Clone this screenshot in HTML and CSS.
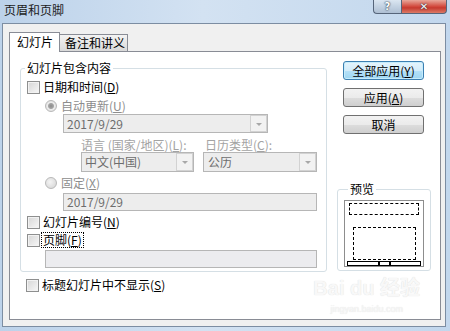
FILE: index.html
```html
<!DOCTYPE html>
<html>

<head>
	<meta charset="utf-8">
	<title>页眉和页脚</title>
	<link rel="stylesheet" href="styles.css">
</head>

<body>
	<div class="window">
		<div class="titlebar">
			<span class="title">页眉和页脚</span>
			<div class="caption-buttons">
				<span class="cap-btn help">?</span>
				<span class="cap-btn close">✕</span>
			</div>
		</div>

		<div class="client">
			<div class="tabs">
				<span class="tab active">幻灯片</span>
				<span class="tab">备注和讲义</span>
			</div>

			<div class="panel">
				<div class="left">
					<fieldset class="group content-group">
						<legend>幻灯片包含内容</legend>
						<div class="row check-row"><span class="check"></span><span>日期和时间(<u>D</u>)</span></div>
						<div class="row radio-row r-auto disabled"><span class="radio on"></span><span>自动更新(<u>U</u>)</span></div>
						<div class="combo r-autodate"><span class="combo-text">2017/9/29</span><span class="combo-arrow"></span></div>
						<div class="row r-labels disabled">
							<span class="lang-label">语言 (国家/地区)(<u>L</u>):</span>
							<span>日历类型(<u>C</u>):</span>
						</div>
						<div class="selects">
							<div class="combo lang"><span class="combo-text">中文(中国)</span><span class="combo-arrow"></span></div>
							<div class="combo cal"><span class="combo-text">公历</span><span class="combo-arrow"></span></div>
						</div>
						<div class="row radio-row r-fixed disabled"><span class="radio"></span><span>固定(<u>X</u>)</span></div>
						<div class="textbox r-fixeddate">2017/9/29</div>
						<div class="row check-row r-number"><span class="check"></span><span>幻灯片编号(<u>N</u>)</span></div>
						<div class="row check-row r-footer"><span class="check"></span><span class="focus">页脚(<u>F</u>)</span></div>
						<div class="textbox r-footertext"></div>
					</fieldset>
					<div class="row check-row r-title"><span class="check"></span><span>标题幻灯片中不显示(<u>S</u>)</span></div>
				</div>

				<div class="right">
					<button type="button" class="btn default">全部应用(<u>Y</u>)</button>
					<button type="button" class="btn">应用(<u>A</u>)</button>
					<button type="button" class="btn">取消</button>
					<fieldset class="group preview-group">
						<legend>预览</legend>
						<div class="preview">
							<div class="dash header-area"></div>
							<div class="dash body-area"></div>
							<div class="footer-bar"><span></span><span class="mid"></span><span></span></div>
						</div>
					</fieldset>
				</div>

				<!-- watermark from the source screenshot -->
				<div class="watermark">
					<div class="wm-main">Bai du 经验</div>
					<div class="wm-sub">jingyan.baidu.com</div>
				</div>
			</div>
		</div>
	</div>
</body>

</html>
```

FILE: styles.css
```css
* {
	box-sizing: border-box;
}

body {
	margin: 0;
	font-family: "Noto Sans CJK SC", "Noto Sans", sans-serif;
	font-size: 12px;
	color: #000;
	background: #fff;
}

u {
	text-decoration: underline;
	text-underline-offset: 1px;
}

.window {
	width: 450px;
	height: 331px;
	overflow: hidden;
	background: linear-gradient(to right, #bcd2ea 0%, #d3e2f2 45%, #c2d7ed 100%);
}

/* title bar */
.titlebar {
	display: flex;
	justify-content: space-between;
	align-items: flex-start;
	height: 23px;
}

.title {
	padding: 3px 0 0 4px;
	line-height: 14px;
	color: #1b1b1b;
}

.caption-buttons {
	display: flex;
	margin-right: 3px;
}

.cap-btn {
	display: flex;
	align-items: center;
	justify-content: center;
	height: 14px;
	border: 1px solid #56657a;
	border-top: none;
	color: #fff;
	font-family: "DejaVu Sans", sans-serif;
	font-weight: bold;
	font-size: 10px;
	text-shadow: 0 0 2px #2d3a4a, 0 0 1px #2d3a4a;
}

.help {
	width: 28px;
	border-right: none;
	border-radius: 0 0 0 4px;
	background: linear-gradient(#dbe6f1, #c3d2e2 50%, #aebfd3);
}

.close {
	width: 46px;
	border-radius: 0 0 4px 0;
	background: linear-gradient(#e8a89b, #d2493d 50%, #c53a2f 60%, #dc7a66);
}

/* client area */
.client {
	margin-left: 2px;
	width: 444px;
	height: 304px;
	border: 1px solid #7c8da2;
	background: #f0f0f0;
}

.tabs {
	position: relative;
	z-index: 1;
	display: flex;
	align-items: flex-end;
	height: 28px;
	margin-left: 6px;
}

.tab {
	width: 68px;
	height: 17px;
	margin-bottom: 1px;
	padding-left: 5px;
	border: 1px solid #898c95;
	border-left: none;
	border-bottom: none;
	background: linear-gradient(#f3f3f3, #e6e6e6 50%, #d9d9d9);
	line-height: 16px;
	white-space: nowrap;
}

.tab.active {
	width: 51px;
	height: 20px;
	margin-bottom: 0;
	padding-left: 7px;
	border-left: 1px solid #898c95;
	background: #fff;
	line-height: 18px;
}

.panel {
	position: relative;
	display: flex;
	width: 432px;
	height: 269px;
	margin: -1px 0 0 6px;
	padding: 9px 0 0 10px;
	border: 1px solid #898c95;
	background: #fff;
}

.left {
	width: 307px;
}

.right {
	width: 94px;
	margin-left: 10px;
}

/* group boxes */
.group {
	margin: 0;
	min-width: 0;
	border: 1px solid #d5dfe5;
	border-radius: 3px;
}

.group legend {
	margin-left: 4px;
	padding: 0 2px;
	line-height: 14px;
}

.content-group {
	padding: 5px 0 3px 0;
}

.row {
	display: flex;
	align-items: center;
	height: 14px;
	line-height: 14px;
	white-space: nowrap;
}

.check-row {
	margin-left: 6px;
}

.radio-row {
	margin-left: 24px;
}

.disabled {
	color: #8d8d8d;
}

.check {
	flex: none;
	width: 13px;
	height: 13px;
	margin-right: 3px;
	border: 1px solid #8e8f8f;
	background: linear-gradient(135deg, #d6d6d6, #f7f7f7);
	box-shadow: inset 0 0 0 1px #f2f2f2;
}

.radio {
	flex: none;
	width: 12px;
	height: 12px;
	margin-right: 4px;
	border: 1px solid #b8b8b8;
	border-radius: 50%;
	background: radial-gradient(circle at 40% 40%, #f4f4f4, #d9d9d9 80%);
}

.radio.on {
	background: radial-gradient(circle, #8c8c8c 0, #a5a5a5 2.5px, #ececec 3.5px, #d6d6d6 100%);
}

.focus {
	padding: 0 1px 0 0;
	margin-left: -1px;
	padding-left: 1px;
	outline: 1px dotted #000;
	outline-offset: 0;
}

.r-auto {
	margin-top: 5px;
}

.r-labels {
	margin: 5px 0 0 60px;
	color: #a3a3a3;
}

.lang-label {
	width: 124px;
}

.r-fixed {
	margin-top: 4px;
}

.r-number {
	margin-top: 4px;
}

.r-footer {
	margin-top: 4px;
}

.r-title {
	margin-top: 6px;
}

/* disabled combos and text boxes */
.combo {
	display: flex;
	height: 20px;
	border: 1px solid #b6b6b6;
	background: #ededed;
	color: #6d6d6d;
	line-height: 18px;
}

.combo-text {
	flex: 1;
	padding-left: 3px;
	white-space: nowrap;
}

.combo-arrow {
	position: relative;
	width: 17px;
	border: 1px solid #d2d2d2;
	background: #f2f2f2;
}

.combo-arrow::after {
	content: "";
	position: absolute;
	left: 5px;
	top: 7px;
	border-left: 3px solid transparent;
	border-right: 3px solid transparent;
	border-top: 3px solid #a8a8a8;
}

.r-autodate {
	width: 205px;
	height: 19px;
	margin: 1px 0 0 42px;
}

.selects {
	display: flex;
	gap: 9px;
	margin-left: 60px;
}

.lang {
	width: 113px;
}

.cal {
	width: 114px;
}

.cal .combo-text {
	padding-left: 4px;
}

.textbox {
	height: 18px;
	border: 1px solid #b6b6b6;
	background: #ededed;
	color: #6d6d6d;
	line-height: 16px;
	padding-left: 3px;
}

.r-fixeddate {
	width: 254px;
	margin: 3px 0 0 42px;
}

.r-footertext {
	width: 272px;
	margin: 3px 0 0 24px;
	background: #ececef;
}

/* buttons */
.btn {
	display: block;
	width: 81px;
	height: 19px;
	margin: 0 0 8px 6px;
	padding: 0;
	border: 1px solid #707070;
	border-radius: 3px;
	background: linear-gradient(#f2f2f2 0%, #ebebeb 50%, #dddddd 51%, #cfcfcf 100%);
	font: inherit;
	line-height: 17px;
	color: #000;
}

.btn.default {
	border-color: #3c7fb1;
	background: linear-gradient(#e5f4fc 0%, #d3ecfa 50%, #b5e1f8 51%, #9fd6f2 100%);
	box-shadow: inset 0 0 0 1px #c5ecfc;
}

/* preview */
.preview-group {
	margin-top: 48px;
	padding: 4px 0 3px 6px;
}

.preview {
	width: 80px;
	height: 67px;
	border: 1px solid #8d8d8d;
	background: #fff;
}

.dash {
	border: 1px dashed #000;
}

.header-area {
	width: 70px;
	height: 12px;
	margin: 2px 0 0 4px;
}

.body-area {
	width: 63px;
	height: 33px;
	margin: 12px 0 0 8px;
}

.footer-bar {
	display: flex;
	width: 74px;
	height: 5px;
	margin: 1px 0 0 2px;
	border: 1px solid #000;
}

.footer-bar span {
	flex: 1;
}

.footer-bar .mid {
	flex: none;
	width: 13px;
	border-left: 2px solid #000;
	border-right: 2px solid #000;
}

.watermark {
	position: absolute;
	right: 20px;
	top: 224px;
	text-align: center;
	color: #f8f8f8;
	font-family: "Liberation Sans", "Noto Sans CJK SC", sans-serif;
	text-shadow: 0 0 1px #d6d6d6;
}

.wm-main {
	font-size: 20px;
	font-weight: bold;
	line-height: 24px;
}

.wm-sub {
	margin-top: 4px;
	font-size: 9px;
	line-height: 11px;
}
```
